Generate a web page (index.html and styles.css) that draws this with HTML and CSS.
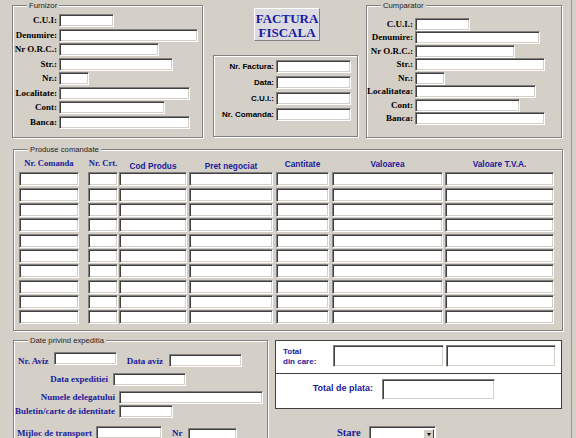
FILE: index.html
```html
<!DOCTYPE html>
<html>
<head>
<meta charset="utf-8">
<title>Factura fiscala</title>
<link rel="stylesheet" href="styles.css">
</head>
<body>
<div class="window">
  <div class="top">
    <div class="group furnizor">
      <span class="legend">Furnizor</span>
      <div class="form f-form">
        <div class="frow"><span class="lbl">C.U.I:</span><span class="inp w55"></span></div>
        <div class="frow"><span class="lbl">Denumire:</span><span class="inp w139"></span></div>
        <div class="frow"><span class="lbl">Nr O.R.C.:</span><span class="inp w100"></span></div>
        <div class="frow"><span class="lbl">Str.:</span><span class="inp w114"></span></div>
        <div class="frow"><span class="lbl">Nr.:</span><span class="inp w30"></span></div>
        <div class="frow"><span class="lbl">Localitate:</span><span class="inp w131"></span></div>
        <div class="frow"><span class="lbl">Cont:</span><span class="inp w106"></span></div>
        <div class="frow"><span class="lbl">Banca:</span><span class="inp w131"></span></div>
      </div>
    </div>
    <div class="middle">
      <div class="title-box">FACTURA<br>FISCALA</div>
      <div class="group doc">
        <div class="form d-form">
          <div class="frow"><span class="lbl">Nr. Factura:</span><span class="inp w75"></span></div>
          <div class="frow"><span class="lbl">Data:</span><span class="inp w75"></span></div>
          <div class="frow"><span class="lbl">C.U.I.:</span><span class="inp w75"></span></div>
          <div class="frow"><span class="lbl">Nr. Comanda:</span><span class="inp w75"></span></div>
        </div>
      </div>
    </div>
    <div class="group cumparator">
      <span class="legend">Cumparator</span>
      <div class="form c-form">
        <div class="frow"><span class="lbl">C.U.I.:</span><span class="inp w55"></span></div>
        <div class="frow"><span class="lbl">Denumire:</span><span class="inp w125"></span></div>
        <div class="frow"><span class="lbl">Nr O.R.C.:</span><span class="inp w100"></span></div>
        <div class="frow"><span class="lbl">Str.:</span><span class="inp w130"></span></div>
        <div class="frow"><span class="lbl">Nr.:</span><span class="inp w30"></span></div>
        <div class="frow"><span class="lbl">Localitatea:</span><span class="inp w121"></span></div>
        <div class="frow"><span class="lbl">Cont:</span><span class="inp w105"></span></div>
        <div class="frow"><span class="lbl">Banca:</span><span class="inp w130"></span></div>
      </div>
    </div>
  </div>

  <div class="group produse">
    <span class="legend">Produse comandate</span>
    <div class="grid">
      <div class="trow thead">
        <span class="c c1 serif">Nr. Comanda</span>
        <span class="c c2 serif">Nr. Crt.</span>
        <span class="c c3">Cod Produs</span>
        <span class="c c4">Pret negociat</span>
        <span class="c c5">Cantitate</span>
        <span class="c c6">Valoarea</span>
        <span class="c c7">Valoare T.V.A.</span>
      </div>
      <div class="trow"><span class="inp c1"></span><span class="inp c2"></span><span class="inp c3"></span><span class="inp c4"></span><span class="inp c5"></span><span class="inp c6"></span><span class="inp c7"></span></div>
      <div class="trow"><span class="inp c1"></span><span class="inp c2"></span><span class="inp c3"></span><span class="inp c4"></span><span class="inp c5"></span><span class="inp c6"></span><span class="inp c7"></span></div>
      <div class="trow"><span class="inp c1"></span><span class="inp c2"></span><span class="inp c3"></span><span class="inp c4"></span><span class="inp c5"></span><span class="inp c6"></span><span class="inp c7"></span></div>
      <div class="trow"><span class="inp c1"></span><span class="inp c2"></span><span class="inp c3"></span><span class="inp c4"></span><span class="inp c5"></span><span class="inp c6"></span><span class="inp c7"></span></div>
      <div class="trow"><span class="inp c1"></span><span class="inp c2"></span><span class="inp c3"></span><span class="inp c4"></span><span class="inp c5"></span><span class="inp c6"></span><span class="inp c7"></span></div>
      <div class="trow"><span class="inp c1"></span><span class="inp c2"></span><span class="inp c3"></span><span class="inp c4"></span><span class="inp c5"></span><span class="inp c6"></span><span class="inp c7"></span></div>
      <div class="trow"><span class="inp c1"></span><span class="inp c2"></span><span class="inp c3"></span><span class="inp c4"></span><span class="inp c5"></span><span class="inp c6"></span><span class="inp c7"></span></div>
      <div class="trow"><span class="inp c1"></span><span class="inp c2"></span><span class="inp c3"></span><span class="inp c4"></span><span class="inp c5"></span><span class="inp c6"></span><span class="inp c7"></span></div>
      <div class="trow"><span class="inp c1"></span><span class="inp c2"></span><span class="inp c3"></span><span class="inp c4"></span><span class="inp c5"></span><span class="inp c6"></span><span class="inp c7"></span></div>
      <div class="trow"><span class="inp c1"></span><span class="inp c2"></span><span class="inp c3"></span><span class="inp c4"></span><span class="inp c5"></span><span class="inp c6"></span><span class="inp c7"></span></div>
    </div>
  </div>

  <div class="bottom">
    <div class="group expeditie">
      <span class="legend">Date privind expeditia</span>
      <div class="erow ra">
        <span class="el el-aviz">Nr. Aviz</span><span class="inp w63 at-top"></span>
        <span class="el el-daviz">Data aviz</span><span class="inp w73 at-bot"></span>
      </div>
      <div class="erow rb">
        <span class="el el-dexp">Data expeditiei</span><span class="inp w73"></span>
      </div>
      <div class="erow rc">
        <span class="el el-wide">Numele delegatului</span><span class="inp w144"></span>
      </div>
      <div class="erow rd">
        <span class="el el-wide">Buletin/carte de identitate</span><span class="inp w54"></span>
      </div>
      <div class="erow re">
        <span class="el el-mij">Mijloc de transport</span><span class="inp w66"></span>
        <span class="el el-nr">Nr</span><span class="inp w49 lowered"></span>
      </div>
    </div>
    <div class="right-col">
      <div class="totals">
        <div class="tot-top">
          <span class="tot-lbl">Total<br>din care:</span>
          <span class="inp w111 h22"></span>
          <span class="inp w110 h22 gap2"></span>
        </div>
        <div class="tot-bot">
          <span class="plata-lbl">Total de plata:</span>
          <span class="inp w113 h21"></span>
        </div>
      </div>
      <div class="stare-row">
        <span class="stare-lbl">Stare</span>
        <span class="select"><span class="dd-btn"><span class="arrow"></span></span></span>
      </div>
    </div>
  </div>
</div>
</body>
</html>
```
FILE: styles.css
```css
html, body {
  margin: 0;
  padding: 0;
  background: #d4d0c8;
}

.window {
  position: relative;
  width: 576px;
  height: 438px;
  overflow: hidden;
  background: #d4d0c8;
  font-family: "Liberation Sans", Arial, sans-serif;
}

.window::after {
  content: "";
  position: absolute;
  top: 0;
  bottom: 0;
  left: 571px;
  width: 1px;
  background: #9a978f;
}

/* etched group box */
.group {
  position: relative;
  box-sizing: border-box;
  border: 1px solid #808080;
  box-shadow: inset 1px 1px #fff, 1px 1px #fff;
}

.legend {
  position: absolute;
  top: -6px;
  left: 14px;
  padding: 0 2px;
  background: #d4d0c8;
  font-family: "Liberation Sans", Arial, sans-serif;
  font-size: 7.7px;
  line-height: 11px;
  color: #222;
  white-space: nowrap;
}

/* sunken text field */
.inp {
  display: block;
  box-sizing: border-box;
  height: 13px;
  flex: none;
  background: #fff;
  border: 1px solid;
  border-color: #808080 #fff #fff #808080;
  box-shadow: inset 1px 1px #404040, inset -1px -1px #d4d0c8;
}

.w30 { width: 30px; }
.w49 { width: 49px; }
.w54 { width: 54px; }
.w55 { width: 55px; }
.w63 { width: 63px; }
.w66 { width: 66px; }
.w73 { width: 73px; }
.w75 { width: 75px; }
.w100 { width: 100px; }
.w105 { width: 105px; }
.w106 { width: 106px; }
.w110 { width: 110px; }
.w111 { width: 111px; }
.w113 { width: 113px; }
.w114 { width: 114px; }
.w121 { width: 121px; }
.w125 { width: 125px; }
.w130 { width: 130px; }
.w131 { width: 131px; }
.w139 { width: 139px; }
.w144 { width: 144px; }
.h21 { height: 21px; }
.h22 { height: 22px; }

/* ---------- top section ---------- */
.top {
  display: flex;
  padding-top: 5px;
  height: 133px;
}

.furnizor {
  margin-left: 12px;
  width: 191px;
  height: 133px;
}

.middle {
  width: 163px;
  display: flex;
  flex-direction: column;
}

.cumparator {
  width: 196px;
  height: 133px;
}

.form {
  display: flex;
  flex-direction: column;
}

.frow {
  display: flex;
  align-items: center;
  height: 13px;
}

.lbl {
  flex: none;
  text-align: right;
  white-space: nowrap;
  margin-right: 2px;
  font-family: "Liberation Serif", "Times New Roman", serif;
  font-weight: bold;
  font-size: 9px;
  line-height: 13px;
  color: #000;
}

.f-form {
  padding-top: 8px;
  gap: 1.57px;
}
.f-form .lbl { width: 44px; }

.c-form {
  padding-top: 12px;
  gap: 0.43px;
}
.c-form .lbl { width: 46px; }

.title-box {
  box-sizing: border-box;
  margin: 3px 0 0 51px;
  width: 66px;
  height: 33px;
  padding-top: 3px;
  background: #dcdbe0;
  border: 1px solid;
  border-color: #fff #808080 #808080 #fff;
  text-align: center;
  font-family: "Liberation Serif", "Times New Roman", serif;
  font-weight: bold;
  font-size: 13px;
  line-height: 14px;
  color: #1a1aa6;
}

.doc {
  margin: 14px 0 0 10px;
  width: 145px;
  height: 82px;
}

.d-form {
  padding-top: 4px;
  gap: 3px;
}
.d-form .lbl {
  width: 60px;
  font-family: "Liberation Sans", Arial, sans-serif;
  font-size: 8px;
}

/* ---------- products ---------- */
.produse {
  margin: 11px 0 0 13px;
  width: 550px;
  height: 182px;
}

.grid {
  display: flex;
  flex-direction: column;
  gap: 1.33px;
  padding: 8px 0 0 5px;
}

.trow {
  display: flex;
  height: 14px;
}

.trow .inp { height: 14px; }

.thead {
  height: 12px;
  margin-bottom: 1px;
  align-items: center;
}

.c {
  flex: none;
  text-align: center;
  white-space: nowrap;
  font-family: "Liberation Sans", Arial, sans-serif;
  font-weight: bold;
  font-size: 8.3px;
  line-height: 12px;
  color: #1a1a9c;
}
.c.serif {
  font-family: "Liberation Serif", "Times New Roman", serif;
  font-size: 8.6px;
  padding-bottom: 3px;
}
.c3, .c4 { padding-top: 3px; }

.c1 { width: 60px; }
.c2 { width: 30px; margin-left: 9px; }
.c3 { width: 68px; margin-left: 1px; }
.c4 { width: 84px; margin-left: 2px; }
.c5 { width: 53px; margin-left: 3px; }
.c6 { width: 111px; margin-left: 3px; }
.c7 { width: 109px; margin-left: 2px; }

/* ---------- bottom ---------- */
.bottom {
  display: flex;
  margin-top: 9px;
}

.expeditie {
  margin-left: 13px;
  width: 255px;
  height: 110px;
  padding-top: 11px;
}

.erow {
  display: flex;
  align-items: center;
  height: 13px;
}
.erow.ra { height: 15px; }
.erow.rb { margin-top: 6px; }
.erow.rc { margin-top: 5px; }
.erow.rd { margin-top: 1px; }
.erow.re { margin-top: 8px; align-items: flex-start; }

.inp.at-top { align-self: flex-start; }
.inp.at-bot { align-self: flex-end; }
.inp.lowered { margin-top: 2px; }

.el {
  flex: none;
  box-sizing: border-box;
  white-space: nowrap;
  font-family: "Liberation Serif", "Times New Roman", serif;
  font-weight: bold;
  font-size: 9px;
  line-height: 13px;
  color: #1a1a9c;
}
.el-aviz { width: 40px; padding-left: 4px; padding-top: 3px; }
.el-daviz { width: 52px; text-align: right; padding-right: 6px; padding-top: 3px; }
.el-dexp { width: 99px; text-align: right; padding-right: 5px; }
.el-wide { width: 105px; text-align: right; padding-right: 4px; }
.el-mij { width: 82px; padding-left: 3px; padding-top: 1px; }
.el-nr { width: 26px; padding-left: 10px; padding-top: 1px; }

.right-col {
  margin-left: 7px;
  width: 287px;
  display: flex;
  flex-direction: column;
}

.totals {
  box-sizing: border-box;
  height: 69px;
  background: #fff;
  border: 1px solid #404040;
}

.tot-top {
  display: flex;
  align-items: flex-start;
  height: 33px;
  padding: 4px 0 0 7px;
  box-sizing: border-box;
  border-bottom: 1px solid #404040;
}

.tot-lbl {
  width: 50px;
  flex: none;
  padding-top: 2px;
  font-family: "Liberation Sans", Arial, sans-serif;
  font-weight: bold;
  font-size: 8px;
  line-height: 10px;
  color: #1a1a9c;
}

.gap2 { margin-left: 2px; }

.tot-bot {
  display: flex;
  align-items: flex-start;
  padding-top: 5px;
}

.plata-lbl {
  flex: none;
  box-sizing: border-box;
  width: 106px;
  padding-right: 9px;
  padding-top: 3px;
  text-align: right;
  white-space: nowrap;
  font-family: "Liberation Sans", Arial, sans-serif;
  font-weight: bold;
  font-size: 9px;
  line-height: 12px;
  color: #1a1a9c;
}

.stare-row {
  display: flex;
  align-items: flex-start;
  margin-top: 17px;
  padding-left: 62px;
}

.stare-lbl {
  width: 32px;
  flex: none;
  font-family: "Liberation Serif", "Times New Roman", serif;
  font-weight: bold;
  font-size: 10.5px;
  line-height: 14px;
  color: #1a1a9c;
}

.select {
  display: flex;
  justify-content: flex-end;
  box-sizing: border-box;
  width: 67px;
  height: 14px;
  padding: 1px;
  background: #fff;
  border: 1px solid;
  border-color: #808080 #fff #fff #808080;
  box-shadow: inset 1px 1px #404040;
}

.dd-btn {
  display: flex;
  align-items: center;
  justify-content: center;
  box-sizing: border-box;
  width: 11px;
  height: 10px;
  margin-top: 1px;
  background: #d4d0c8;
  border: 1px solid;
  border-color: #fff #404040 #404040 #fff;
}

.arrow {
  width: 0;
  height: 0;
  border-left: 2.5px solid transparent;
  border-right: 2.5px solid transparent;
  border-top: 3px solid #000;
}
```
